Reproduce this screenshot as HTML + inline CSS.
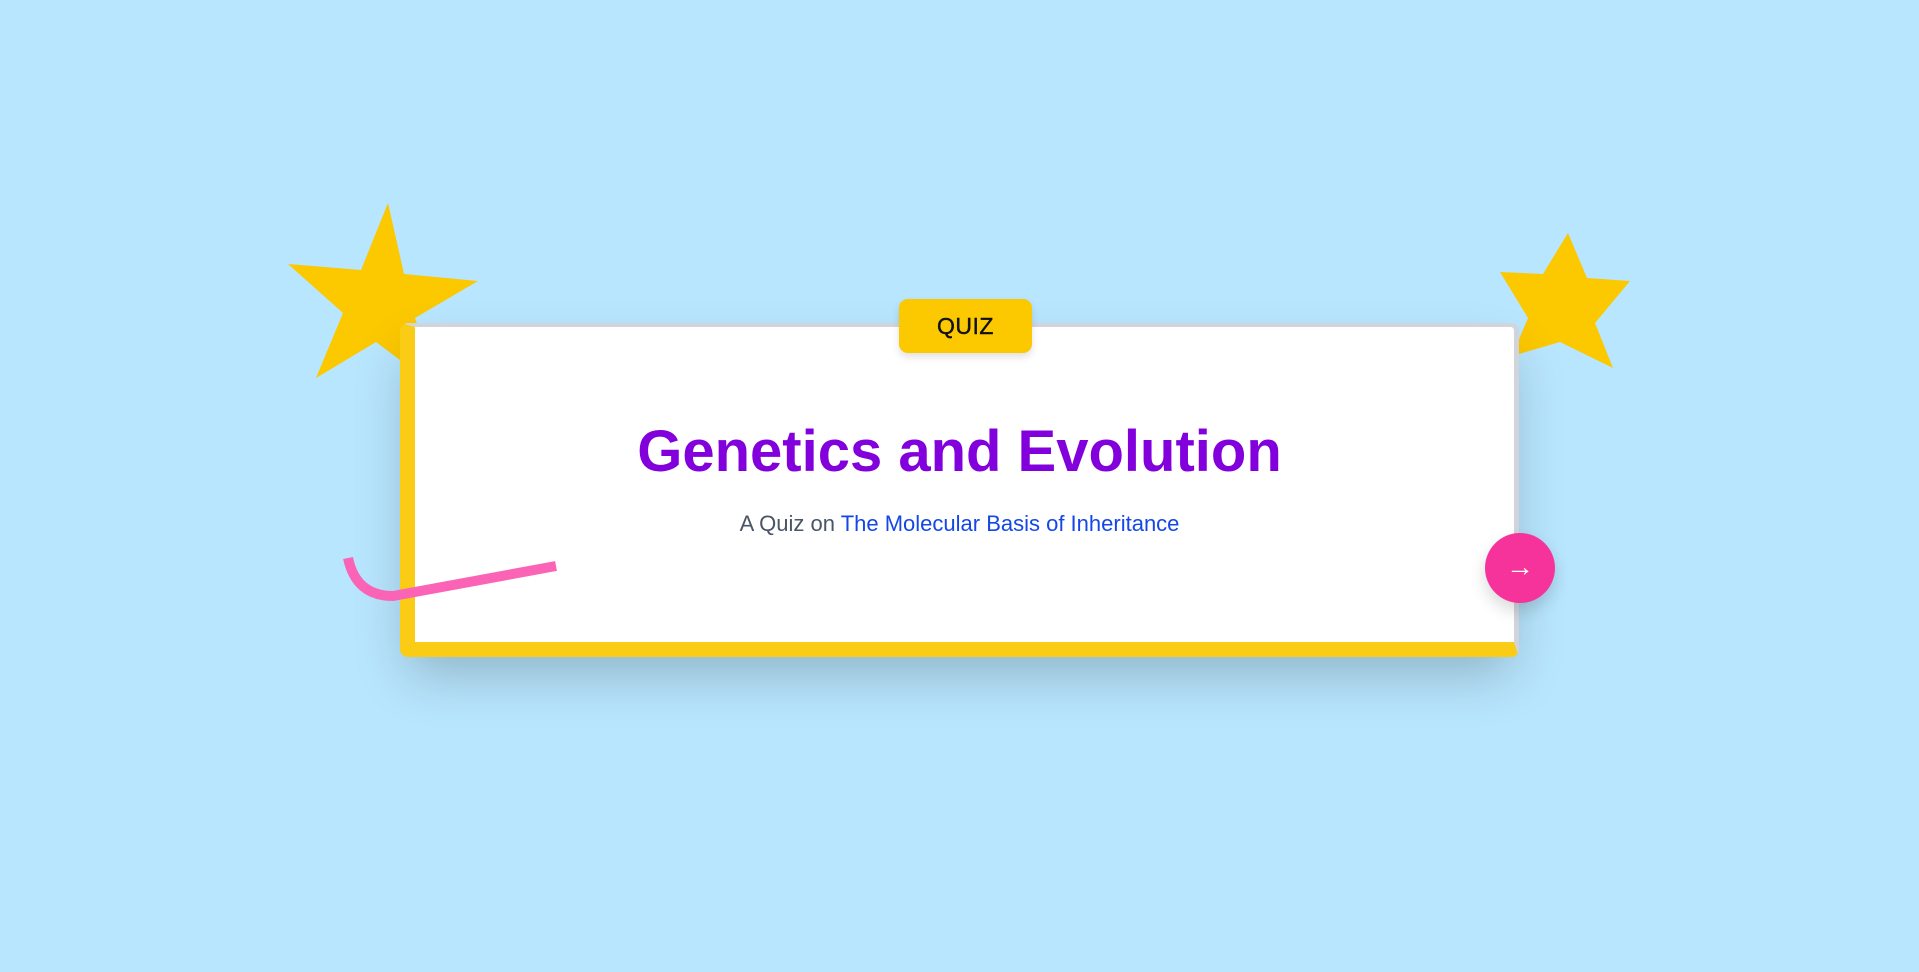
<!DOCTYPE html>
<html><head><meta charset="utf-8"><style>
html,body{margin:0;padding:0;width:1919px;height:972px;overflow:hidden;background:#b8e6fe;font-family:"Liberation Sans",sans-serif;}
.abs{position:absolute;}
.card{position:absolute;left:400px;top:323px;width:1119px;height:334px;box-sizing:border-box;background:#fff;border-top:4px solid #d1d5db;border-right:5px solid #d1d5db;border-left:15px solid #facc15;border-bottom:15px solid #facc15;border-radius:8px;box-shadow:0 25px 50px -8px rgba(0,0,0,0.22);}
.badge{position:absolute;left:899px;top:299px;width:133px;height:54px;background:#fcc800;border-radius:9px;box-shadow:0 4px 8px rgba(0,0,0,0.12);text-align:center;line-height:54px;font-size:23px;font-weight:normal;color:#111;letter-spacing:0.5px;-webkit-text-stroke:0.4px #111;}
h1{position:absolute;left:400px;width:1119px;top:412px;margin:0;text-align:center;font-size:58px;font-weight:bold;color:#8200db;line-height:80px;}
.sub{position:absolute;left:400px;width:1119px;top:510px;text-align:center;font-size:22px;color:#4a5565;line-height:28px;}
.sub span{color:#1447e6;}
.btn{position:absolute;left:1485px;top:533px;width:70px;height:70px;border-radius:50%;background:#f6339a;box-shadow:0 8px 16px rgba(0,0,0,0.15);color:#fff;text-align:center;line-height:68px;font-size:28px;}
</style></head><body>
<svg class="abs" style="left:0;top:0" width="1919" height="972">
<polygon fill="#fcc800" points="388,203 404,274 478,281 415,318 440,390 376,342 316,378 343,313 288,264 361,270"/>
<polygon fill="#fcc800" points="1568,233 1587,278 1630,281 1595,323 1613,368 1560,342 1512,356 1528,318 1500,272 1543,274"/>
</svg>
<div class="card"></div>
<div class="badge">QUIZ</div>
<h1>Genetics and Evolution</h1>
<div class="sub">A Quiz on <span>The Molecular Basis of Inheritance</span></div>
<svg class="abs" style="left:0;top:0" width="1919" height="972">
<path d="M348,558 Q356,596 393,596 L556,566" fill="none" stroke="#fb64b6" stroke-width="10"/>
</svg>
<div class="btn">→</div>
</body></html>
